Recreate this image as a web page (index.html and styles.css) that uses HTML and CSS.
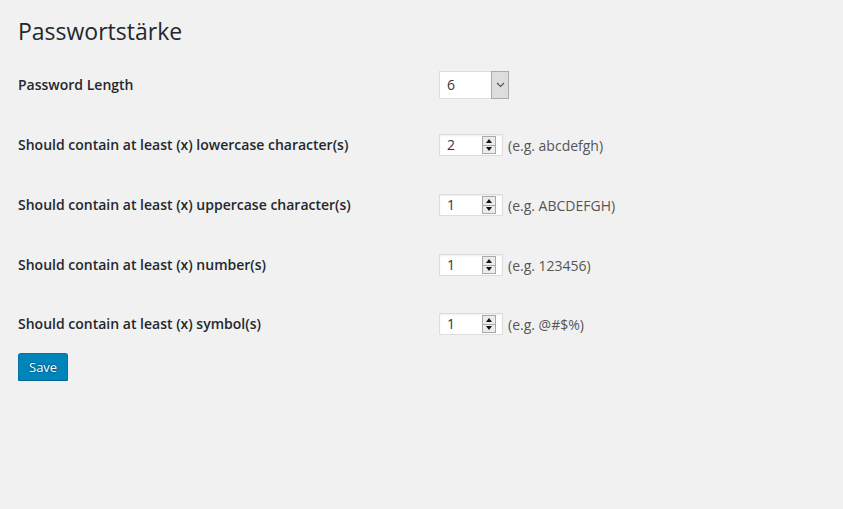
FILE: index.html
```html
<!DOCTYPE html>
<html lang="de">
<head>
<meta charset="utf-8">
<title>Passwortstärke</title>
<link rel="stylesheet" href="styles.css">
</head>
<body>
<div class="wrap">
  <h1 class="title">Passwortstärke</h1>
  <div class="form-table">
    <div class="label">Password Length</div>
    <div class="field">
      <div class="select">
        <span class="select-value">6</span>
        <span class="select-arrow"><svg width="9" height="6" viewBox="0 0 9 6"><path d="M1 1 L4.5 4.5 L8 1" fill="none" stroke="#555" stroke-width="1.2"/></svg></span>
      </div>
    </div>

    <div class="label">Should contain at least (x) lowercase character(s)</div>
    <div class="field">
      <div class="num"><span class="num-value">2</span><span class="spin"><span class="spin-btn"><span class="tri-up"></span></span><span class="spin-btn"><span class="tri-down"></span></span></span></div>
      <span class="hint">(e.g. abcdefgh)</span>
    </div>

    <div class="label">Should contain at least (x) uppercase character(s)</div>
    <div class="field">
      <div class="num"><span class="num-value">1</span><span class="spin"><span class="spin-btn"><span class="tri-up"></span></span><span class="spin-btn"><span class="tri-down"></span></span></span></div>
      <span class="hint">(e.g. ABCDEFGH)</span>
    </div>

    <div class="label">Should contain at least (x) number(s)</div>
    <div class="field">
      <div class="num"><span class="num-value">1</span><span class="spin"><span class="spin-btn"><span class="tri-up"></span></span><span class="spin-btn"><span class="tri-down"></span></span></span></div>
      <span class="hint">(e.g. 123456)</span>
    </div>

    <div class="label">Should contain at least (x) symbol(s)</div>
    <div class="field">
      <div class="num"><span class="num-value">1</span><span class="spin"><span class="spin-btn"><span class="tri-up"></span></span><span class="spin-btn"><span class="tri-down"></span></span></span></div>
      <span class="hint">(e.g. @#$%)</span>
    </div>
  </div>
  <button class="button-primary" type="button">Save</button>
</div>
</body>
</html>
```

FILE: styles.css
```css
html, body {
  margin: 0;
  padding: 0;
  background: #f1f1f1;
}
body {
  font-family: "Open Sans", "Noto Sans", sans-serif;
  color: #23282d;
  font-size: 14px;
}
.wrap {
  padding: 17px 18px 0 18px;
}
.title {
  margin: 0 0 9px 0;
  font-size: 23px;
  font-weight: 400;
  line-height: 29px;
  color: #23282d;
}
.form-table {
  display: grid;
  grid-template-columns: 421px auto;
  grid-template-rows: repeat(4, 60px) 58px;
  align-items: center;
}
.label {
  font-weight: 600;
  font-size: 14px;
  line-height: 18px;
  color: #23282d;
}
.field {
  display: flex;
  align-items: center;
  gap: 5px;
}
.select {
  box-sizing: border-box;
  width: 70px;
  height: 28px;
  display: flex;
  background: #fff;
  border: 1px solid #ddd;
}
.select-value {
  flex: 1;
  padding-left: 7px;
  line-height: 26px;
  color: #32373c;
}
.select-arrow {
  box-sizing: border-box;
  width: 18px;
  margin: -1px -1px -1px 0;
  background: #dddddd;
  border: 1px solid #aaa;
  display: flex;
  align-items: center;
  justify-content: center;
}
.num {
  box-sizing: border-box;
  width: 64px;
  height: 22px;
  display: flex;
  align-items: center;
  background: #fff;
  border: 1px solid #ddd;
  box-shadow: inset 0 1px 2px rgba(0, 0, 0, 0.07);
}
.num-value {
  flex: 1;
  padding-left: 7px;
  line-height: 20px;
  color: #32373c;
}
.spin {
  box-sizing: border-box;
  width: 14px;
  height: 18px;
  margin-right: 6px;
  display: flex;
  flex-direction: column;
  border: 1px solid #a9a9a9;
  background: #ececec;
}
.spin-btn {
  flex: 1;
  display: flex;
  align-items: center;
  justify-content: center;
}
.spin-btn + .spin-btn {
  border-top: 1px solid #a9a9a9;
}
.tri-up {
  width: 0;
  height: 0;
  border-left: 3px solid transparent;
  border-right: 3px solid transparent;
  border-bottom: 4px solid #111;
}
.tri-down {
  width: 0;
  height: 0;
  border-left: 3px solid transparent;
  border-right: 3px solid transparent;
  border-top: 4px solid #111;
}
.hint {
  color: #555;
  font-size: 14px;
}
.button-primary {
  box-sizing: border-box;
  height: 28px;
  width: 50px;
  padding: 0 10px 1px;
  font-family: "Open Sans", "Noto Sans", sans-serif;
  font-size: 13px;
  line-height: 26px;
  color: #fff;
  background: #0085ba;
  border: 1px solid #0073aa;
  border-bottom-color: #006799;
  border-radius: 3px;
  box-shadow: 0 1px 0 #006799;
  text-shadow: 0 -1px 1px #006799, 1px 0 1px #006799, 0 1px 1px #006799, -1px 0 1px #006799;
  cursor: pointer;
}
```
